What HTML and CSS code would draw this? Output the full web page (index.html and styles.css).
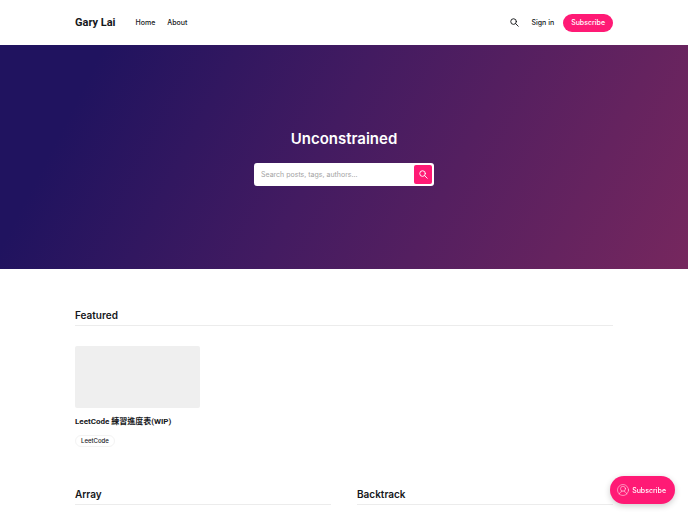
FILE: index.html
```
<!DOCTYPE html>
<html lang="en">
<head>
    <meta charset="UTF-8">
    <meta name="viewport" content="width=device-width, initial-scale=1.0">
    <title>Gary Lai</title>
    <link rel="stylesheet" href="styles.css">
</head>
<body>
    <header class="header">
        <div class="container header-inner">
            <a class="logo" href="#">Gary Lai</a>
            <nav class="nav">
                <a href="#">Home</a>
                <a href="#">About</a>
            </nav>
            <div class="header-actions">
                <button class="icon-btn" type="button" aria-label="Search">
                    <svg viewBox="0 0 24 24" width="9" height="9"><circle cx="9.5" cy="9.5" r="7.5"/><path d="M15 15l7 7"/></svg>
                </button>
                <a class="sign-in" href="#">Sign in</a>
                <a class="btn" href="#">Subscribe</a>
            </div>
        </div>
    </header>

    <section class="hero">
        <h1>Unconstrained</h1>
        <form class="search">
            <input type="text" placeholder="Search posts, tags, authors..." aria-label="Search posts, tags, authors">
            <button type="button" aria-label="Search">
                <svg viewBox="0 0 24 24" width="9" height="9"><circle cx="9.5" cy="9.5" r="7.5"/><path d="M15 15l7 7"/></svg>
            </button>
        </form>
    </section>

    <main class="container">
        <section class="featured">
            <h2>Featured</h2>
            <div class="cards">
                <article class="card">
                    <a class="card-image" href="#" aria-label="LeetCode 練習進度表(WIP)"></a>
                    <h3><a href="#">LeetCode 練習進度表(WIP)</a></h3>
                    <a class="tag" href="#">LeetCode</a>
                </article>
            </div>
        </section>

        <div class="topics">
            <section>
                <h2>Array</h2>
            </section>
            <section>
                <h2>Backtrack</h2>
            </section>
        </div>
    </main>

    <button class="portal" type="button">
        <svg viewBox="0 0 24 24" width="12" height="12">
            <circle cx="12" cy="12" r="11"/>
            <circle cx="12" cy="9.5" r="5"/>
            <path d="M4.500 20c1-3 3-4.500 5.500-5v-1M19.500 20c-1-3-3-4.500-5.500-5v-1"/>
        </svg>
        Subscribe
    </button>
</body>
</html>
```
FILE: styles.css
```
* {
    box-sizing: border-box;
}
body {
    margin: 0;
    background: #fff;
    color: #15171a;
    font-family: Inter, "Noto Sans CJK TC", sans-serif;
    font-size: 7px;
    overflow: hidden;
}
a {
    color: inherit;
    text-decoration: none;
}
button {
    border: none;
    padding: 0;
    font-family: inherit;
    cursor: pointer;
}
svg {
    fill: none;
    stroke: currentColor;
    stroke-width: 2.5;
    stroke-linecap: round;
}
h1, h2, h3 {
    margin: 0;
}
h3, .logo {
    font-family: Roboto, "Noto Sans CJK TC", sans-serif;
}
.container {
    max-width: 1200px;
    margin: 0 auto;
    padding: 0 75px;
}
.header-inner {
    display: flex;
    align-items: center;
    height: 45px;
}
.logo {
    font-size: 11px;
    font-weight: 700;
}
.nav {
    display: flex;
    gap: 12px;
    margin-left: 20px;
    font-weight: 500;
}
.header-actions {
    display: flex;
    align-items: center;
    margin-left: auto;
    font-weight: 500;
}
.icon-btn {
    display: flex;
    background: none;
    color: inherit;
}
.sign-in {
    margin: 0 9px 0 12px;
}
.btn {
    padding: 0 8px;
    border-radius: 9px;
    background: #ff1a75;
    color: #fff;
    font-size: 7px;
    line-height: 18px;
}
.hero {
    display: flex;
    flex-direction: column;
    align-items: center;
    padding: 83px 20px 83px;
    background: linear-gradient(117deg, #20135f 0%, #20135f 13%, #431b61 47%, #76275e 100%);
}
.hero h1 {
    margin-bottom: 13px;
    color: #fff;
    font-size: 15px;
    font-weight: 600;
    line-height: 22px;
}
.search {
    display: flex;
    width: 100%;
    max-width: 180px;
    padding: 2px;
    border-radius: 3px;
    background: #fff;
}
.search input {
    flex: 1;
    min-width: 0;
    padding: 0 5px;
    border: none;
    outline: none;
    background: none;
    font-family: inherit;
    font-size: 7px;
}
.search input::placeholder {
    color: #a3a3a3;
}
.search button {
    display: flex;
    align-items: center;
    justify-content: center;
    width: 18px;
    height: 19px;
    border-radius: 2px;
    background: #ff1a75;
    color: #fff;
}
h2 {
    padding-bottom: 3px;
    border-bottom: 1px solid #ececec;
    font-size: 10px;
    font-weight: 600;
    line-height: 14px;
}
.featured {
    padding-top: 39px;
}
.cards {
    display: grid;
    grid-template-columns: repeat(4, 1fr);
    gap: 13px;
    margin-top: 20px;
}
.card-image {
    display: block;
    aspect-ratio: 2 / 1;
    border-radius: 2px;
    background: #efefef;
}
.card h3 {
    margin: 8px 0 7px;
    font-size: 8px;
    font-weight: 700;
    line-height: 12px;
}
.tag {
    display: inline-block;
    padding: 0 5px;
    border: 1px solid #f3f3f3;
    border-radius: 6px;
    font-size: 6px;
    font-weight: 500;
    line-height: 10px;
}
.topics {
    display: grid;
    grid-template-columns: 1fr 1fr;
    gap: 26px;
    padding-top: 40px;
}
.portal {
    position: fixed;
    right: 13px;
    bottom: 8px;
    display: flex;
    align-items: center;
    gap: 3px;
    height: 28px;
    padding: 0 9px 0 7px;
    border-radius: 14px;
    background: #ff1a75;
    box-shadow: 0 2px 6px rgba(0, 0, 0, 0.2);
    color: #fff;
    font-size: 7px;
    font-weight: 500;
}
.portal svg {
    stroke-width: 1;
}
```
